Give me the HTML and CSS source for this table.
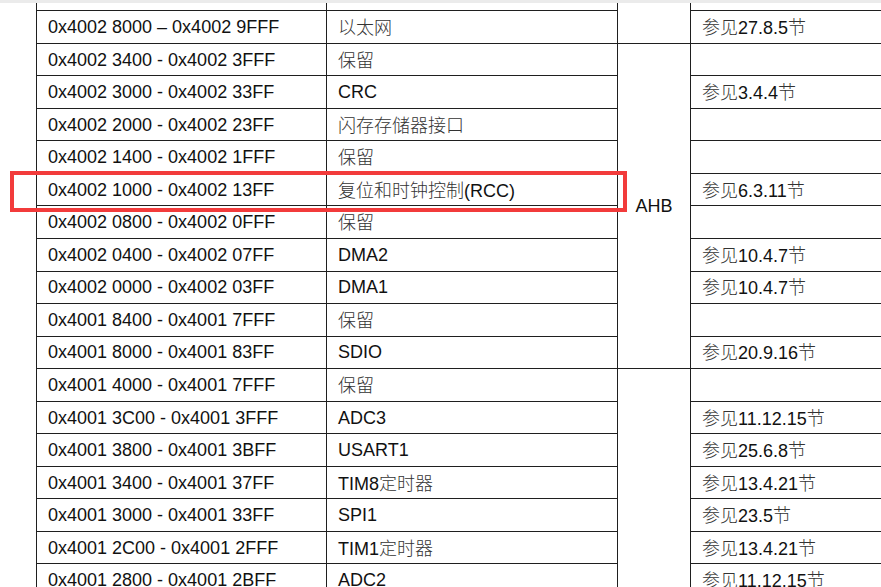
FILE: index.html
```html
<!DOCTYPE html>
<html lang="zh-CN">
<head>
<meta charset="utf-8">
<title>存储器映像</title>
<link rel="stylesheet" href="styles.css">
</head>
<body>
<div class="topbar"></div>
<div class="viewport">
  <table class="map">
    <colgroup>
      <col class="c-addr">
      <col class="c-name">
      <col class="c-bus">
      <col class="c-ref">
    </colgroup>
    <tbody>
      <tr class="partial">
        <td></td><td></td><td class="bus" rowspan="2"></td><td></td>
      </tr>
      <tr>
        <td>0x4002 8000 – 0x4002 9FFF</td>
        <td><span class="zh">以太网</span></td>
        <td><span class="zh">参见</span>27.8.5<span class="zh">节</span></td>
      </tr>
      <tr>
        <td>0x4002 3400 - 0x4002 3FFF</td>
        <td><span class="zh">保留</span></td>
        <td class="bus" rowspan="10">AHB</td>
        <td></td>
      </tr>
      <tr>
        <td>0x4002 3000 - 0x4002 33FF</td>
        <td>CRC</td>
        <td><span class="zh">参见</span>3.4.4<span class="zh">节</span></td>
      </tr>
      <tr>
        <td>0x4002 2000 - 0x4002 23FF</td>
        <td><span class="zh">闪存存储器接口</span></td>
        <td></td>
      </tr>
      <tr>
        <td>0x4002 1400 - 0x4002 1FFF</td>
        <td><span class="zh">保留</span></td>
        <td></td>
      </tr>
      <tr>
        <td>0x4002 1000 - 0x4002 13FF</td>
        <td><span class="zh">复位和时钟控制</span>(RCC)</td>
        <td><span class="zh">参见</span>6.3.11<span class="zh">节</span></td>
      </tr>
      <tr>
        <td>0x4002 0800 - 0x4002 0FFF</td>
        <td><span class="zh">保留</span></td>
        <td></td>
      </tr>
      <tr>
        <td>0x4002 0400 - 0x4002 07FF</td>
        <td>DMA2</td>
        <td><span class="zh">参见</span>10.4.7<span class="zh">节</span></td>
      </tr>
      <tr>
        <td>0x4002 0000 - 0x4002 03FF</td>
        <td>DMA1</td>
        <td><span class="zh">参见</span>10.4.7<span class="zh">节</span></td>
      </tr>
      <tr>
        <td>0x4001 8400 - 0x4001 7FFF</td>
        <td><span class="zh">保留</span></td>
        <td></td>
      </tr>
      <tr>
        <td>0x4001 8000 - 0x4001 83FF</td>
        <td>SDIO</td>
        <td><span class="zh">参见</span>20.9.16<span class="zh">节</span></td>
      </tr>
      <tr>
        <td>0x4001 4000 - 0x4001 7FFF</td>
        <td><span class="zh">保留</span></td>
        <td class="bus" rowspan="7"></td>
        <td></td>
      </tr>
      <tr>
        <td>0x4001 3C00 - 0x4001 3FFF</td>
        <td>ADC3</td>
        <td><span class="zh">参见</span>11.12.15<span class="zh">节</span></td>
      </tr>
      <tr>
        <td>0x4001 3800 - 0x4001 3BFF</td>
        <td>USART1</td>
        <td><span class="zh">参见</span>25.6.8<span class="zh">节</span></td>
      </tr>
      <tr>
        <td>0x4001 3400 - 0x4001 37FF</td>
        <td>TIM8<span class="zh">定时器</span></td>
        <td><span class="zh">参见</span>13.4.21<span class="zh">节</span></td>
      </tr>
      <tr>
        <td>0x4001 3000 - 0x4001 33FF</td>
        <td>SPI1</td>
        <td><span class="zh">参见</span>23.5<span class="zh">节</span></td>
      </tr>
      <tr>
        <td>0x4001 2C00 - 0x4001 2FFF</td>
        <td>TIM1<span class="zh">定时器</span></td>
        <td><span class="zh">参见</span>13.4.21<span class="zh">节</span></td>
      </tr>
      <tr>
        <td>0x4001 2800 - 0x4001 2BFF</td>
        <td>ADC2</td>
        <td><span class="zh">参见</span>11.12.15<span class="zh">节</span></td>
      </tr>
    </tbody>
  </table>
  <div class="highlight"></div>
</div>
</body>
</html>
```
FILE: styles.css
```css
html, body {
  margin: 0;
  padding: 0;
  background: #ffffff;
}

.topbar {
  height: 3px;
  background: #ebebeb;
}

.viewport {
  position: relative;
  width: 881px;
  height: 584px;
  overflow: hidden;
}

.map {
  border-collapse: collapse;
  table-layout: fixed;
  margin-left: 36px;
  width: 880px;
  font-family: "Liberation Sans", Arial, sans-serif;
  font-size: 18px;
  color: #111111;
}

.c-addr { width: 290px; }
.c-name { width: 291px; }
.c-bus { width: 73px; }
.c-ref { width: 226px; }

.map td {
  border: 1px solid #1f1f1f;
  height: 31.55px;
  padding: 0 11px;
  vertical-align: middle;
  white-space: nowrap;
  line-height: 18px;
}

.map .partial td {
  height: 7.2px;
  border-top: none;
}

.map td.bus {
  text-align: center;
  padding: 0;
}

.zh {
  font-family: "Noto Sans CJK SC", sans-serif;
  font-weight: 300;
  color: #333333;
}

.highlight {
  position: absolute;
  left: 10px;
  top: 168px;
  width: 617px;
  height: 41px;
  box-sizing: border-box;
  border: 4px solid #f23b3b;
}
```
